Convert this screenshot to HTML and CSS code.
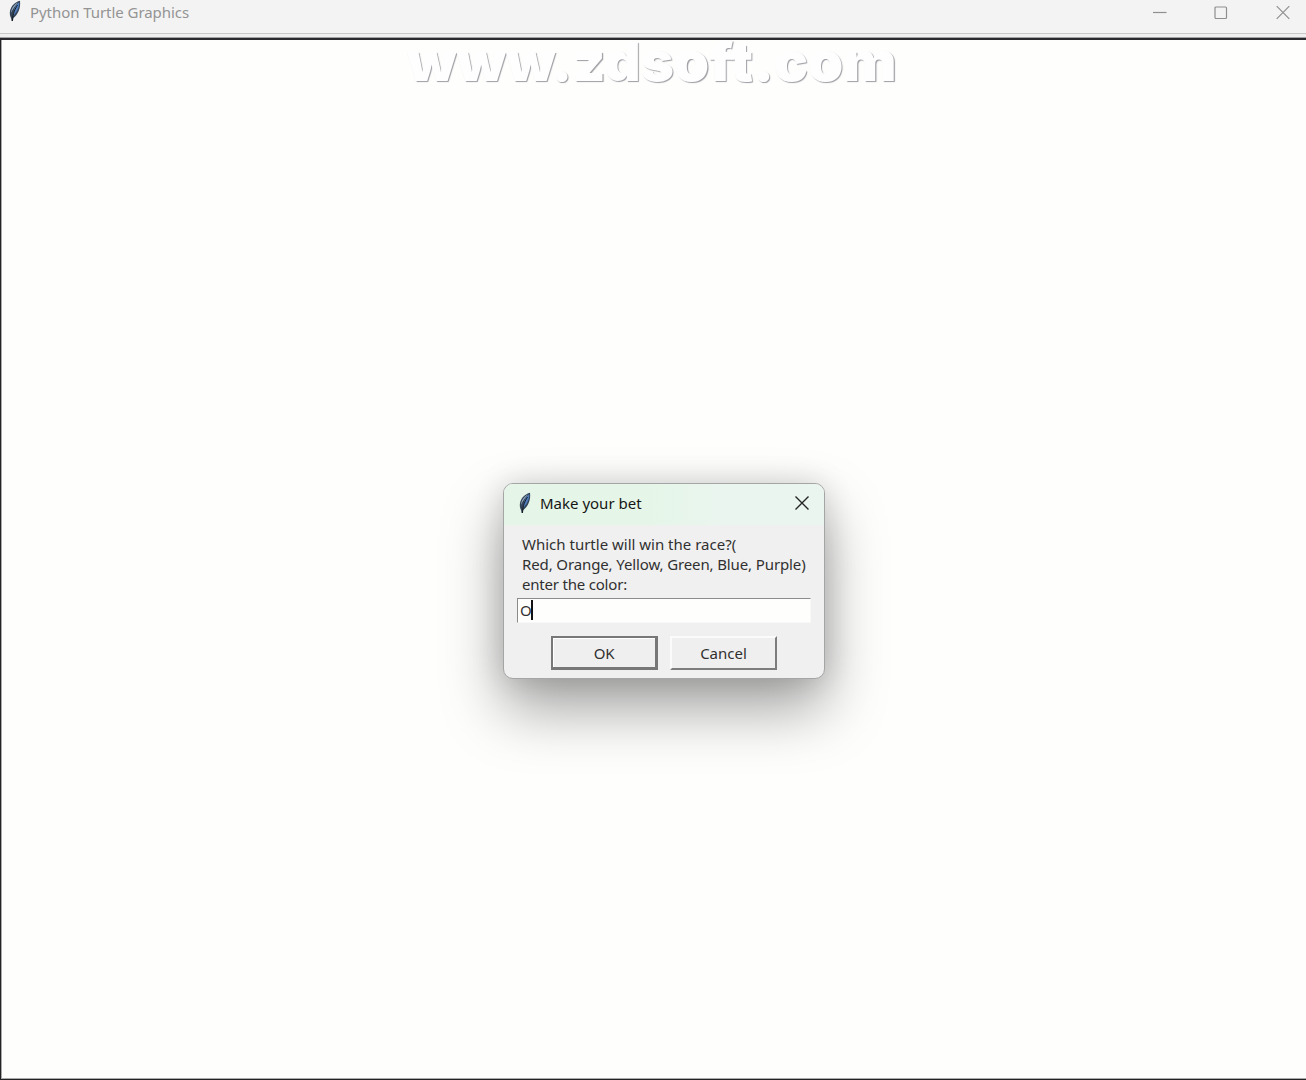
FILE: index.html
```html
<!DOCTYPE html>
<html lang="en">
<head>
<meta charset="utf-8">
<title>Python Turtle Graphics</title>
<link rel="stylesheet" href="styles.css">
</head>
<body>
<svg width="0" height="0" class="defs" aria-hidden="true">
  <symbol id="feather" viewBox="0 0 14 22">
    <path d="M12 .8C7 2 3 6 2 11c-.5 3 0 5 1 7l.7 3h1.200l.5-3C9.500 15 13 9 12 .8z" fill="#344458"/>
    <path d="M11.300 2.300C8.200 4 5.800 9 5 16c3.500-3 6.300-8 6.300-13.700z" fill="#4f7fc0"/>
    <path d="M10 2.400C6 4.500 3.300 8 3 13c1.700-3.800 3.700-7 7-10.600z" fill="#91a8bd"/>
    <path d="M9.500 5C7 9 5 13 4.300 21" fill="none" stroke="#15191e" stroke-width="1"/>
  </symbol>
</svg>
<div class="window">
  <header class="titlebar">
    <svg class="feather"><use href="#feather"/></svg>
    <h1 class="title">Python Turtle Graphics</h1>
    <div class="controls">
      <svg width="14" height="14" viewBox="0 0 14 14"><path d="M0 6.500h13.500"/></svg>
      <svg width="14" height="14" viewBox="0 0 14 14"><rect x="1" y="1" width="11.500" height="11.500" rx="1"/></svg>
      <svg width="14" height="14" viewBox="0 0 14 14"><path d="M.7.200l12.600 12.600M13.300.2L.7 12.800"/></svg>
    </div>
  </header>
  <main class="canvas">
    <div class="watermark">www.zdsoft.com</div>
    <section class="dialog">
      <header class="dialog-bar">
        <svg class="feather"><use href="#feather"/></svg>
        <h2 class="dialog-title">Make your bet</h2>
        <svg class="close" width="14" height="14" viewBox="0 0 14 14"><path d="M.5.500l13 13M13.500.5l-13 13"/></svg>
      </header>
      <div class="dialog-body">
        <p class="prompt"><span class="line1">Which turtle will win the race?(</span><br><span class="line2">Red, Orange, Yellow, Green, Blue, Purple)</span><br><span class="line3">enter the color:</span></p>
        <div class="entry"><span class="value">O</span><i class="caret"></i></div>
        <div class="buttons">
          <button class="button default"><span>OK</span></button>
          <button class="button"><span>Cancel</span></button>
        </div>
      </div>
    </section>
  </main>
</div>
</body>
</html>
```
FILE: styles.css
```css
* { box-sizing: border-box; }
body { margin: 0; font-family: "Noto Sans", sans-serif; background: #fefefd; }
.defs { position: absolute; }
.window { width: 1306px; height: 1080px; display: flex; flex-direction: column; overflow: hidden; }
.titlebar {
  height: 38px; flex: none; display: flex; align-items: flex-start;
  padding: 0 16px 0 8px;
  background: linear-gradient(#f3f3f3 33px, #c9c9c9 33px, #c9c9c9 34px, #efefef 34px, #efefef 37px, #a2a2a2 37px);
}
.feather { width: 14px; height: 22px; flex: none; }
.title { margin: 2px 0 0 8px; font-size: 15px; line-height: 21px; font-weight: 400; color: #949494; white-space: nowrap; letter-spacing: -.06px; }
.controls { margin: 6px 1px 0 auto; display: flex; gap: 47px; fill: none; stroke: #8f8f8f; stroke-width: 1.2; }
.controls svg:last-child { margin-left: 1px; margin-right: -1px; }
.canvas {
  flex: 1; position: relative; display: flex; align-items: flex-start; justify-content: center;
  border: solid #242424; border-width: 2px 0 1px 1px; border-top-color: #2a2a2e;
  box-shadow: inset 1px -1px #aaa;
  padding: 443px 0 0 21px;
}
.watermark {
  position: absolute; left: 406px; top: -10px; font: 900 54px/64px Inter, sans-serif;
  color: #fefefe; text-shadow: 1px 1px 1px #9c9ca2; white-space: nowrap;
  transform: scaleX(1.045); transform-origin: left;
}
.dialog {
  width: 322px; height: 196px; border: 1.500px solid #a4a6a5; border-radius: 10px;
  background: #f0f0f0; overflow: hidden;
  box-shadow: 0 30px 60px rgba(0,0,0,.36), 0 0 30px rgba(0,0,0,.14);
}
.dialog-bar { height: 41px; display: flex; align-items: flex-start; padding: 8px 15px 0 14px; background: linear-gradient(90deg, #e5f6e8 45%, #eaf5ef 70%); }
.dialog-title { margin: 1px 0 0 8px; font-size: 15px; line-height: 21px; font-weight: 400; color: #151515; white-space: nowrap; }
.close { margin: 4px 0 0 auto; fill: none; stroke: #252525; stroke-width: 1.4; }
.dialog-body { padding: 9px 13px 0; }
.prompt { margin: 0 0 0 5px; font-size: 15px; line-height: 20px; color: #303030; white-space: nowrap; }
.line1 { letter-spacing: 0; }
.line2 { letter-spacing: -.12px; }
.line3 { letter-spacing: -.2px; }
.entry { height: 25px; margin-top: 4px; display: flex; align-items: flex-start; padding-left: 2px; background: #fefefd; border: solid; border-width: 1px; border-color: #8b8b8b #f8f8f8 #f8f8f8 #8b8b8b; }
.value { font-size: 15px; line-height: 22px; color: #333; width: 11px; }
.caret { width: 2px; height: 20px; margin-top: 1px; background: #111; }
.buttons { display: flex; gap: 12px; margin: 13px 0 0 34px; }
.button { width: 107px; height: 34px; padding: 0 0 1px; font: 15px/20px "Noto Sans", sans-serif; color: #303030; background: #efefef; border: solid; border-width: 2px; border-color: #fbfbfb #7d7d7d #7d7d7d #fbfbfb; }
.button.default { border-width: 2px 3px 3px 2px; border-color: #777; box-shadow: inset 1px 1px #fff; letter-spacing: -.3px; padding: 0; }
```
